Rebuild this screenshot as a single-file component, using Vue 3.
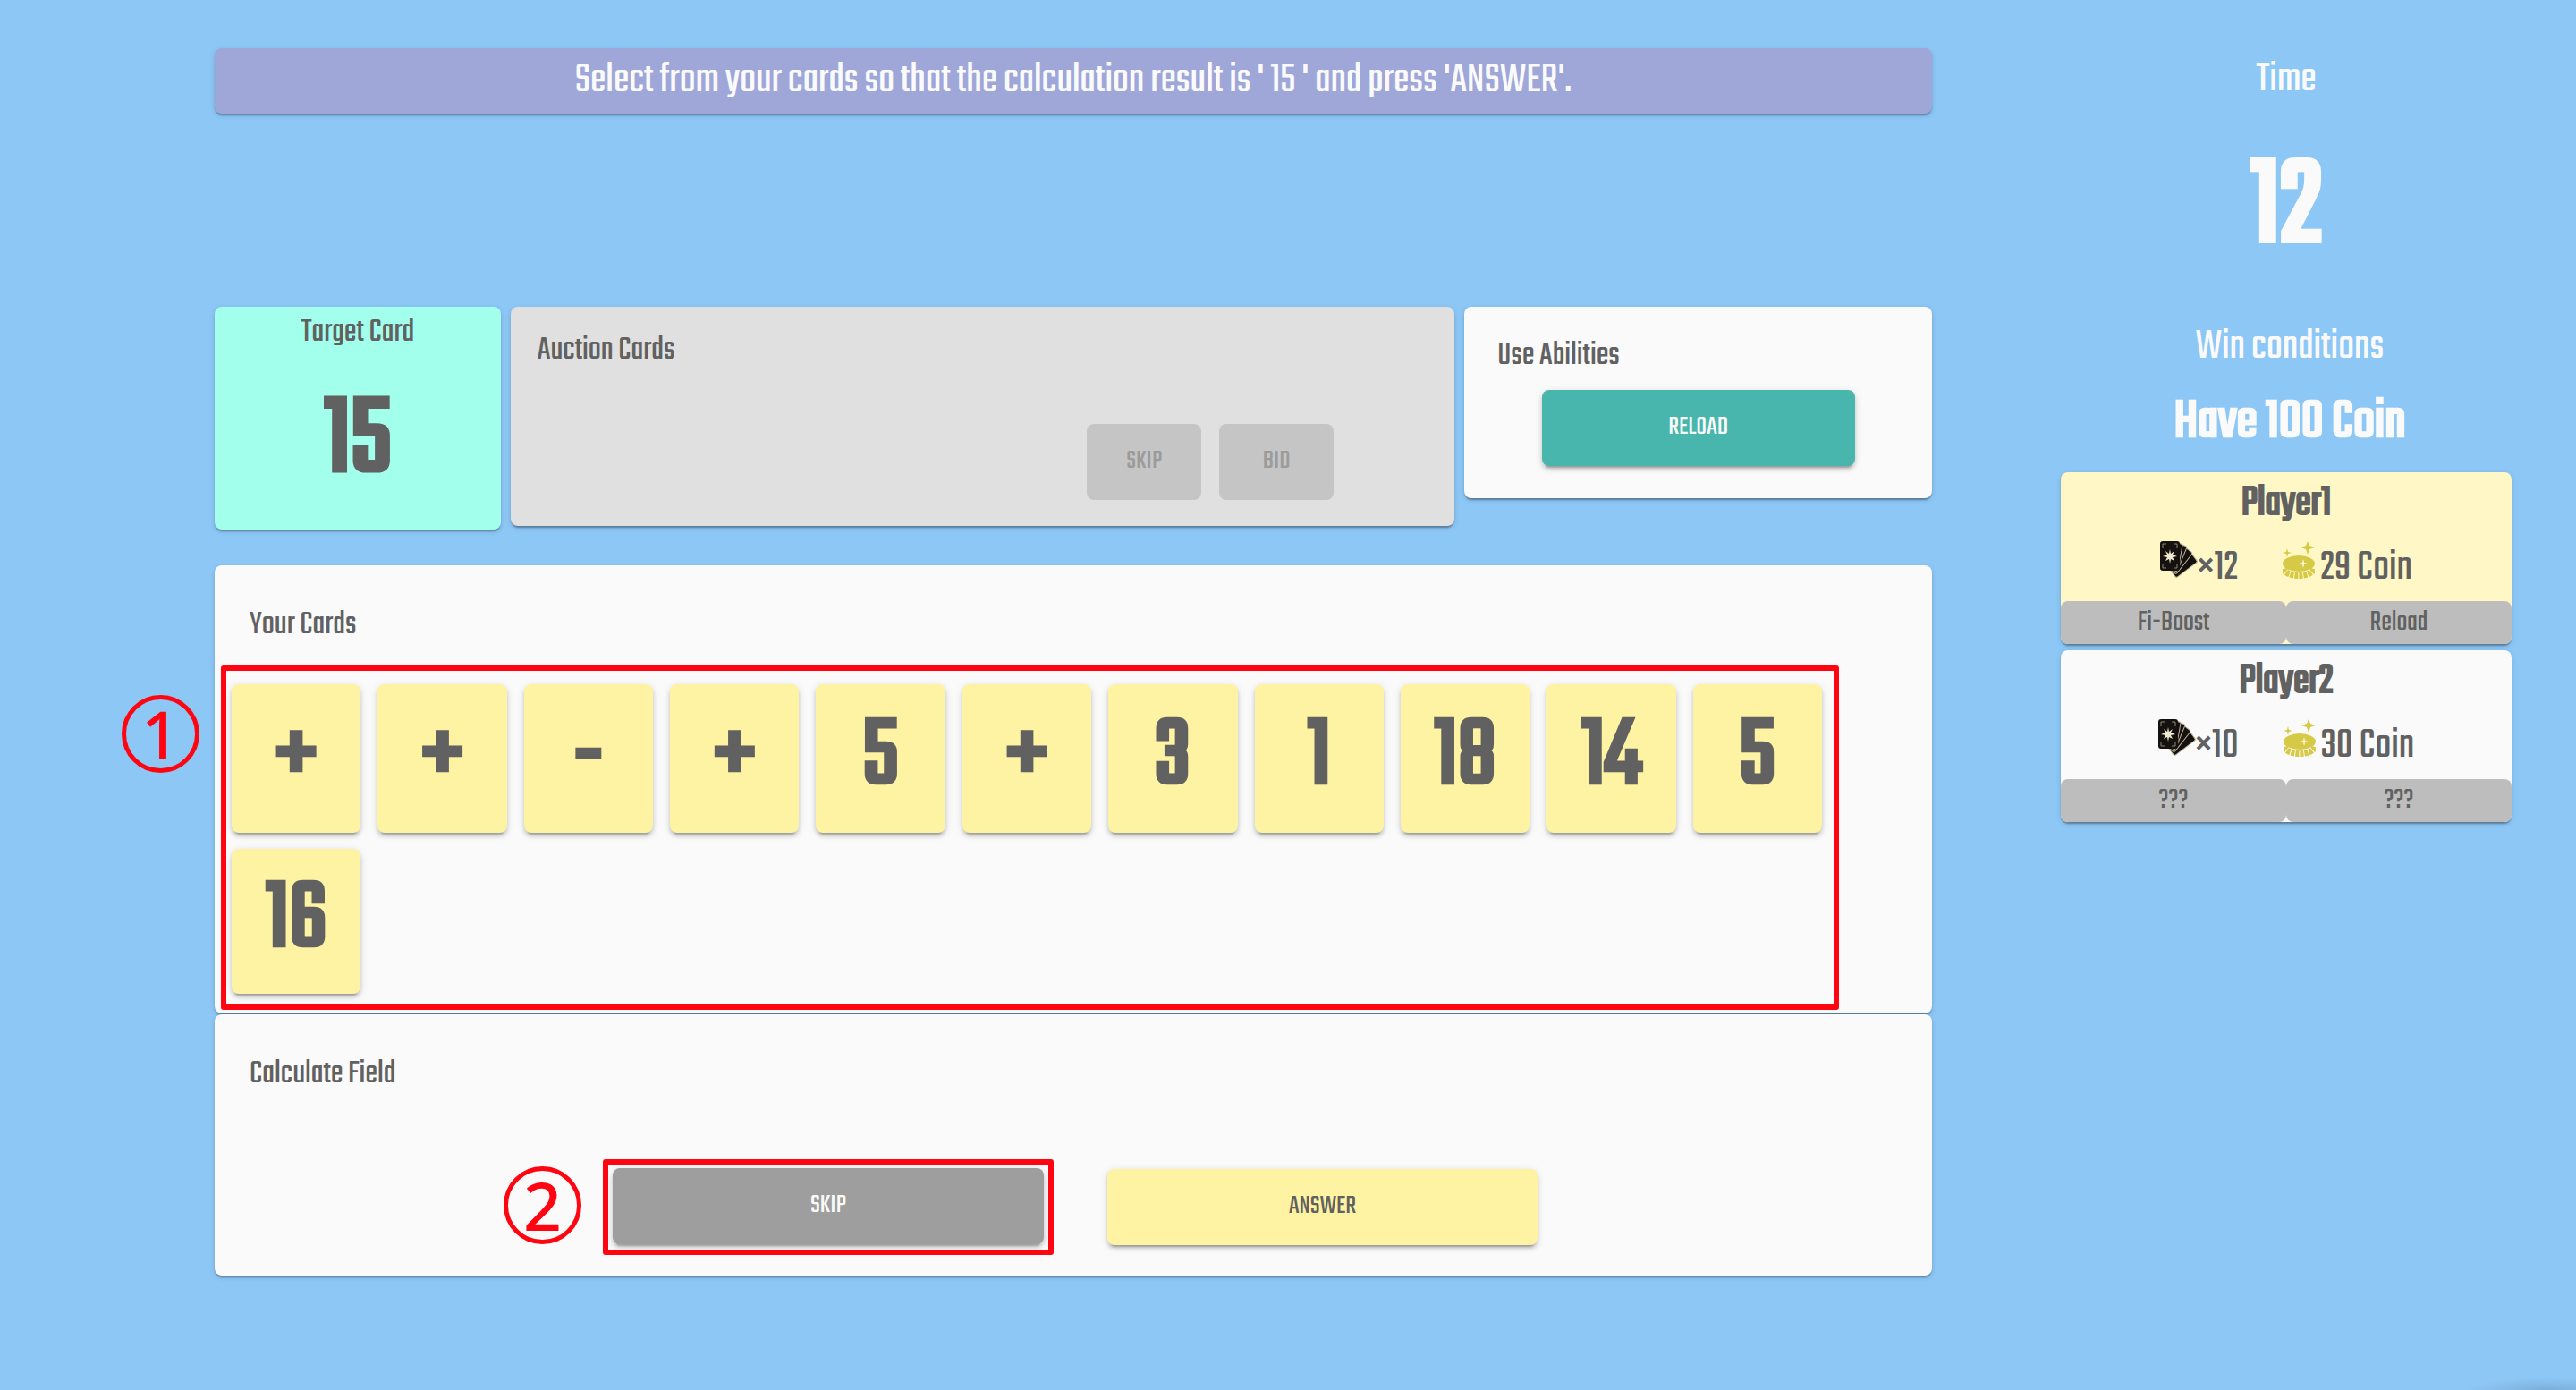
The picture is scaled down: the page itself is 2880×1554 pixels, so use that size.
<script setup>
import { ref } from 'vue'

const targetNumber = ref(15)
const secondsLeft = ref(12)
const hand = ref(['+', '+', '-', '+', '5', '+', '3', '1', '18', '14', '5', '16'])
const players = ref([
  { name: 'Player1', cards: 12, coins: 29, abilities: ['Fi-Boost', 'Reload'], active: true },
  { name: 'Player2', cards: 10, coins: 30, abilities: ['???', '???'], active: false },
])
</script>

<template>
  <div class="game">
    <main class="board">
      <p class="banner">Select from your cards so that the calculation result is ' {{ targetNumber }} ' and press 'ANSWER'.</p>

      <div class="top-row">
        <section class="panel target">
          <h2 class="title">Target Card</h2>
          <p class="target-number heavy">{{ targetNumber }}</p>
        </section>

        <section class="panel auction">
          <h2 class="title">Auction Cards</h2>
          <div class="auction-actions">
            <button class="btn btn-disabled" type="button" disabled>SKIP</button>
            <button class="btn btn-disabled" type="button" disabled>BID</button>
          </div>
        </section>

        <section class="panel abilities">
          <h2 class="title">Use Abilities</h2>
          <button class="btn btn-teal" type="button">RELOAD</button>
        </section>
      </div>

      <section class="panel hand-panel">
        <h2 class="title">Your Cards</h2>
        <div class="marked hand">
          <span class="badge">1</span>
          <button v-for="(card, i) in hand" :key="i" class="card heavy" type="button">{{ card }}</button>
        </div>
      </section>

      <section class="panel calc-panel">
        <h2 class="title">Calculate Field</h2>
        <div class="calc-actions">
          <div class="marked skip-frame">
            <span class="badge badge-low">2</span>
            <button class="btn btn-gray" type="button">SKIP</button>
          </div>
          <button class="btn btn-yellow" type="button">ANSWER</button>
        </div>
      </section>
    </main>

    <aside class="side">
      <p class="side-label">Time</p>
      <p class="clock heavy">{{ secondsLeft }}</p>
      <div class="win">
        <p class="side-label">Win conditions</p>
        <p class="goal heavy">Have 100 Coin</p>
      </div>

      <div class="players">
        <section v-for="p in players" :key="p.name" class="panel player" :class="{ active: p.active }">
          <h3 class="player-name heavy">{{ p.name }}</h3>
          <div class="stats">
            <svg class="icon-cards" viewBox="0 0 42 42" aria-hidden="true">
              <g fill="#15110f" stroke="#b9b39a" stroke-width="1">
                <rect x="2" y="11" width="16" height="30" rx="2" transform="rotate(53 18 41)" />
                <rect x="2" y="7" width="16" height="30" rx="2" transform="rotate(38 18 37)" />
                <rect x="3" y="4" width="16" height="30" rx="2" transform="rotate(22 19 34)" />
                <rect x="4" y="3" width="16" height="30" rx="2" transform="rotate(10 20 33)" />
              </g>
              <rect x="0" y="0" width="22" height="33" rx="3" fill="#15110f" />
              <path d="M3 8V3h4M15 3h4v5M3 25v5h4M15 30h4v-5" fill="none" stroke="#8d8874" stroke-width="1" />
              <path d="M11 9l1 5 4-3-2 4 5 2-5 1 2 4-4-2-1 5-1-5-4 2 2-4-5-1 5-2-2-4 4 3z" fill="#eee9cf" />
            </svg>
            <span class="stat-text">×{{ p.cards }}</span>
            <svg class="icon-coin" viewBox="0 0 36 42" aria-hidden="true">
              <g fill="#d6c945">
                <path d="M28 0l2 5 6 2-6 2-2 6-2-6-6-2 6-2z" />
                <path d="M5 8l1 4 4 1-4 1-1 4-1-4-4-1 4-1z" />
                <ellipse cx="18" cy="25" rx="18" ry="9" />
              </g>
              <path d="M1 31C4 41 32 41 35 31" fill="none" stroke="#d6c945" stroke-width="7" stroke-dasharray="4 1" />
              <path d="M23 20l1 4 4 1-4 1-1 4-1-4-4-1 4-1z" fill="#fffbe0" />
            </svg>
            <span class="stat-text">{{ p.coins }} Coin</span>
          </div>
          <ul class="ability-list">
            <li v-for="(a, i) in p.abilities" :key="i">{{ a }}</li>
          </ul>
        </section>
      </div>
    </aside>
  </div>
</template>

<style>
body {
  margin: 0;
  background: #8dc7f6;
}
</style>

<style scoped>
.game {
  display: grid;
  grid-template-columns: 10fr 80fr 6fr 21fr 3fr;
  min-height: 100vh;
  box-sizing: border-box;
  padding-top: 54px;
  background: radial-gradient(ellipse 90px 14px at calc(100% - 32px) 100%, rgba(0, 0, 0, 0.12), transparent);
  font-family: Teko, "Liberation Sans Narrow", sans-serif;
  color: #616161;
}
p, h2, h3, ul {
  margin: 0;
  padding: 0;
}
/* Thickened regular weight, for numbers and names */
.heavy {
  font-weight: 400;
  -webkit-text-stroke: 0.04em currentColor;
}
.board {
  grid-column: 2;
}
.panel {
  border-radius: 8px;
  background: #fafafa;
  box-shadow: 0 4px 2px -2px rgba(0, 0, 0, 0.2), 0 2px 2px rgba(0, 0, 0, 0.14), 0 2px 6px rgba(0, 0, 0, 0.12);
}
.banner {
  border-radius: 8px;
  background: #9fa7d8;
  box-shadow: 0 4px 2px -2px rgba(0, 0, 0, 0.2), 0 2px 2px rgba(0, 0, 0, 0.14), 0 2px 6px rgba(0, 0, 0, 0.12);
  color: #fafafa;
  font-size: 48px;
  line-height: 73px;
  text-align: center;
}
.title {
  font-size: 38px;
  font-weight: 400;
  line-height: 52px;
}
.top-row {
  display: grid;
  grid-template-columns: 320fr 1056fr 523fr;
  align-items: start;
  gap: 11px;
  margin-top: 216px;
}
.target {
  padding-top: 3px;
  background: #a2ffeb;
  text-align: center;
}
.target-number {
  font-size: 128px;
  line-height: 194px;
}
.auction {
  padding: 23px 135px 29px 30px;
  background: #e0e0e0;
}
.auction-actions {
  display: flex;
  justify-content: flex-end;
  gap: 20px;
  margin-top: 56px;
}
.btn {
  height: 85px;
  padding: 0 0 2px;
  border: 0;
  border-radius: 8px;
  font-family: inherit;
  font-size: 30px;
  box-shadow: 0 6px 2px -4px rgba(0, 0, 0, 0.2), 0 4px 4px rgba(0, 0, 0, 0.14), 0 2px 10px rgba(0, 0, 0, 0.12);
}
.btn-disabled {
  width: 128px;
  background: #c5c5c5;
  box-shadow: none;
  color: #9b9b9b;
}
.abilities {
  padding: 29px 0 36px;
}
.abilities .title {
  padding-left: 37px;
}
.btn-teal {
  display: block;
  width: 67%;
  margin: 12px auto 0;
  background: #48b6ac;
  color: #fafafa;
}
.hand-panel {
  margin-top: 40px;
  padding: 41px 104px 4px 7px;
}
.hand-panel .title {
  padding-left: 32px;
}
.marked {
  position: relative;
  border: 6px solid #ff0511;
  border-radius: 3px;
}
.hand {
  display: grid;
  grid-template-columns: repeat(11, 1fr);
  grid-template-rows: 166px 162px;
  gap: 18px 19px;
  margin-top: 19px;
  padding: 15px 13px 12px 6px;
}
.card {
  display: block;
  padding: 0;
  border: 0;
  border-radius: 8px;
  background: #fef3a2;
  box-shadow: 0 6px 2px -4px rgba(0, 0, 0, 0.2), 0 4px 4px rgba(0, 0, 0, 0.14), 0 2px 10px rgba(0, 0, 0, 0.12);
  color: #616161;
  font-family: inherit;
  font-size: 112px;
  line-height: 160px;
}
.badge {
  position: absolute;
  top: 27px;
  left: -117px;
  width: 77px;
  height: 77px;
  border: 5px solid #ff0511;
  border-radius: 50%;
  color: #ff0511;
  font-family: "Noto Sans", sans-serif;
  font-size: 75px;
  font-weight: 500;
  line-height: 76px;
  text-align: center;
}
.badge-low {
  top: 2px;
}
.calc-panel {
  margin-top: 1px;
  padding: 41px 0 23px;
}
.calc-panel .title {
  padding-left: 39px;
}
.calc-actions {
  display: grid;
  grid-template-columns: 434fr 504fr 60fr 481fr 441fr;
  align-items: center;
  margin-top: 69px;
}
.skip-frame {
  grid-column: 2;
  padding: 4px 5px 6px;
}
.btn-gray {
  display: block;
  width: 100%;
  background: #9e9e9e;
  color: #fafafa;
}
.btn-yellow {
  grid-column: 4;
  background: #fef3a2;
  color: #616161;
}
.side {
  grid-column: 4;
  text-align: center;
}
.side-label {
  color: #fafafa;
  font-size: 48px;
  line-height: 72px;
}
.clock {
  color: #fafafa;
  font-size: 144px;
  line-height: 216px;
}
.win {
  margin-top: 11px;
  padding-left: 8px;
}
.goal {
  color: #fafafa;
  font-size: 64px;
  line-height: 96px;
}
.players {
  display: grid;
  gap: 7px;
  margin-top: 7px;
}
.player.active {
  background: #fff8c6;
}
.player-name {
  font-size: 48px;
  line-height: 72px;
}
.stats {
  display: flex;
  align-items: center;
  justify-content: center;
  height: 72px;
  font-size: 48px;
  line-height: 72px;
}
.icon-cards {
  width: 42px;
  height: 42px;
  margin-bottom: 20px;
}
.icon-coin {
  width: 36px;
  height: 42px;
  margin: 0 6px 20px 50px;
}
.ability-list {
  display: grid;
  grid-template-columns: 1fr 1fr;
  list-style: none;
}
.ability-list li {
  border-radius: 8px;
  background: #bdbdbd;
  font-size: 32px;
  line-height: 48px;
}
</style>
